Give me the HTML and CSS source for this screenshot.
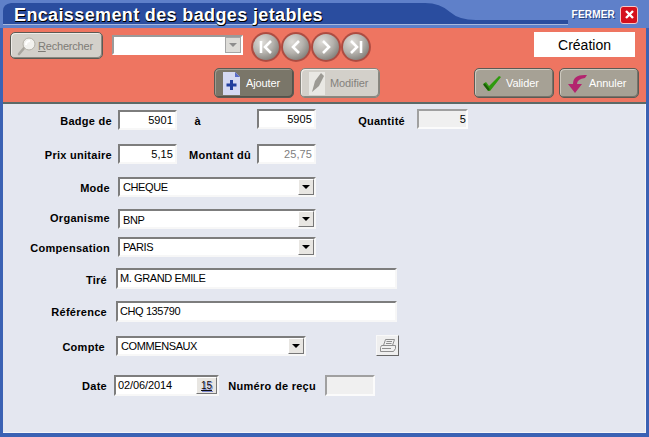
FILE: index.html
```html
<!DOCTYPE html>
<html lang="fr">
<head>
<meta charset="utf-8">
<title>Encaissement des badges jetables</title>
<link rel="stylesheet" href="styles.css">
</head>
<body>
<div class="window">
  <header class="titlebar">
    <svg class="title-shape" width="649" height="28" viewBox="0 0 649 28" aria-hidden="true">
      <path d="M3 25V11Q3 4 11 3H425Q440 3 450 12Q459 20 476 20H568V24H3Z" fill="#2a4d9f"/>
      <path d="M3 24H568V25H3Z" fill="#a9b9de"/>
    </svg>
    <h1 class="title">Encaissement des badges jetables</h1>
    <div class="close-group">
      <span class="close-label">FERMER</span>
      <span class="close-btn">
        <svg width="11" height="11" viewBox="0 0 11 11" aria-hidden="true"><path d="M2 2L9 9M9 2L2 9" stroke="#fff" stroke-width="2.4"/></svg>
      </span>
    </div>
  </header>

  <section class="toolbar">
    <div class="tool-top">
      <button class="btn btn-search">
        <svg width="20" height="20" viewBox="0 0 20 20" aria-hidden="true"><path d="M2 18L8 11" stroke="#a8a59e" stroke-width="2.6" stroke-linecap="round"/><circle cx="12" cy="8" r="6" fill="#f2f1ee" stroke="#b3b0a8"/><path d="M9 9Q9 5 13 5" stroke="#fff" stroke-width="2" fill="none"/></svg>
        <span><u>R</u>echercher</span>
      </button>
      <div class="tool-combo"><span class="tool-arrow"></span></div>
      <nav class="navs">
        <span class="nav"><svg width="26" height="26" viewBox="0 0 26 26" aria-hidden="true"><path d="M8 7V19M18 7L12 13L18 19" stroke="#fff" stroke-width="2.6" fill="none"/></svg></span>
        <span class="nav"><svg width="26" height="26" viewBox="0 0 26 26" aria-hidden="true"><path d="M16 7L10 13L16 19" stroke="#fff" stroke-width="2.6" fill="none"/></svg></span>
        <span class="nav"><svg width="26" height="26" viewBox="0 0 26 26" aria-hidden="true"><path d="M10 7L16 13L10 19" stroke="#fff" stroke-width="2.6" fill="none"/></svg></span>
        <span class="nav"><svg width="26" height="26" viewBox="0 0 26 26" aria-hidden="true"><path d="M18 7V19M8 7L14 13L8 19" stroke="#fff" stroke-width="2.6" fill="none"/></svg></span>
      </nav>
      <div class="status">Création</div>
    </div>
    <div class="tool-bottom">
      <button class="btn btn-action btn-dark gap-4">
        <svg width="22" height="26" viewBox="0 0 22 26" aria-hidden="true"><path d="M3 2H15L20 7V25H3Z" fill="#d5d9f2"/><path d="M15 2L20 7H15Z" fill="#5a6cc8"/><path d="M11.500 10V20M6.500 15H16.500" stroke="#233f9e" stroke-width="3"/></svg>
        <span>Ajouter</span>
      </button>
      <button class="btn btn-action btn-light gap-2">
        <svg width="22" height="26" viewBox="0 0 22 26" aria-hidden="true"><path d="M3 2H19V25H3Z" fill="#e9e8e4"/><path d="M6 22L9 11L15 3L18 6L13 16Z" fill="#9c9a94"/></svg>
        <span>Modifier</span>
      </button>
      <span class="spacer"></span>
      <button class="btn btn-action btn-mid gap-2">
        <svg width="24" height="22" viewBox="0 0 24 22" aria-hidden="true"><path d="M3 12L6 10L9 14L19 4L21 5L10 19H8Z" fill="#2f9a0e"/><path d="M4 12L9 18" stroke="#1c5a08" stroke-width="2"/></svg>
        <span>Valider</span>
      </button>
      <button class="btn btn-action btn-mid btn-last">
        <svg width="24" height="24" viewBox="0 0 24 24" aria-hidden="true"><path d="M22 4Q8 3 8 13H3L10 22L17 13H12Q12 8 20 7Z" fill="#b3246f"/></svg>
        <span>Annuler</span>
      </button>
    </div>
  </section>

  <main class="form">
    <div class="row row-1">
      <label class="lab lab-a">Badge de</label>
      <span class="field num w-a low">5901</span>
      <label class="lab lab-to">à</label>
      <span class="field num w-b high">5905</span>
      <label class="lab lab-qty">Quantité</label>
      <span class="field num off w-c high">5</span>
    </div>
    <div class="row row-2">
      <label class="lab lab-a">Prix unitaire</label>
      <span class="field num w-a">5,15</span>
      <label class="lab lab-due">Montant dû</label>
      <span class="field num w-b grey">25,75</span>
    </div>
    <div class="row row-3">
      <label class="lab lab-b">Mode</label>
      <span class="field combo w-d">CHEQUE<i class="drop"></i></span>
    </div>
    <div class="row row-4">
      <label class="lab lab-b">Organisme</label>
      <span class="field combo w-d">BNP<i class="drop"></i></span>
    </div>
    <div class="row row-5">
      <label class="lab lab-b">Compensation</label>
      <span class="field combo w-d">PARIS<i class="drop"></i></span>
    </div>
    <div class="row row-6">
      <label class="lab lab-c">Tiré</label>
      <span class="field w-e">M. GRAND EMILE</span>
    </div>
    <div class="row row-7">
      <label class="lab lab-c">Référence</label>
      <span class="field w-e">CHQ 135790</span>
    </div>
    <div class="row row-8">
      <label class="lab lab-d">Compte</label>
      <span class="field combo w-f">COMMENSAUX<i class="drop"></i></span>
      <button class="print">
        <svg width="18" height="16" viewBox="0 0 18 16" aria-hidden="true"><path d="M6.500 1.500H15.500L13.500 7.500H4.500ZM7.500 3.500H13M7 5.500H12.500M2.500 7.500H16.500V10.500L14.500 13.500H1.500V9.500ZM3 10.500H12" fill="#f0f0f0" stroke="#8e8e8e"/></svg>
      </button>
    </div>
    <div class="row row-9">
      <label class="lab lab-e">Date</label>
      <span class="field date">02/06/2014<i class="cal">15</i></span>
      <label class="lab lab-rec">Numéro de reçu</label>
      <span class="field off w-g"></span>
    </div>
  </main>
</div>
</body>
</html>
```
FILE: styles.css
```css
* { box-sizing: border-box; }
html, body { margin: 0; height: 100%; }
body { background: #3b62b4; font-family: "Liberation Sans", Arial, sans-serif; overflow: hidden; }
.window { position: relative; width: 649px; height: 437px; display: flex; flex-direction: column; padding: 0 3px 4px; background: #3b62b4; }

.titlebar { position: relative; height: 28px; margin: 0 -3px; padding-left: 14px; display: flex; align-items: center; justify-content: space-between; background: #5f80c9; flex: none; }
.title-shape { position: absolute; left: 0; top: 0; }
.title { position: relative; margin: 0; font-size: 18px; line-height: 22px; font-weight: bold; color: #fff; letter-spacing: .37px; text-shadow: 1px 1px 0 #000, 0 1px 0 #000; white-space: nowrap; padding-top: 2px; }
.close-group { position: relative; display: flex; align-items: center; gap: 5px; padding-right: 11px; padding-top: 1px; }
.close-label { font-size: 10px; font-weight: bold; color: #fff; letter-spacing: .2px; text-shadow: 1px 1px 0 #24427f; }
.close-btn { width: 18px; height: 18px; border-radius: 3px; background: #d5101c; border: 1px solid #f5c9c9; display: flex; align-items: center; justify-content: center; }

.toolbar { height: 76px; flex: none; background: #ee7561; border-bottom: 2px solid #5b6a68; display: flex; flex-direction: column; }
.tool-top { display: flex; align-items: flex-start; height: 38px; padding: 4px 11px 0 7px; }
.tool-bottom { display: flex; height: 35px; padding: 2px 7px 0 211px; gap: 6px; }
.spacer { width: 82px; flex: none; }

.btn { flex: none; display: flex; align-items: center; padding: 0; margin: 0; font-family: "Liberation Sans", Arial, sans-serif; font-size: 11px; border: 1px solid #5c5a54; border-radius: 5px; box-shadow: inset 1px 1px 0 #eeece8, inset -1px -1px 0 #8a8880; }
.btn-search { width: 93px; height: 27px; padding-left: 6px; gap: 1px; background: #d3d0ca; color: #7d7b76; letter-spacing: -.2px; }
.btn-action { width: 80px; height: 30px; padding-left: 5px; gap: 0; letter-spacing: -.1px; }
.gap-4 { gap: 4px; }
.gap-2 { gap: 2px; }
.btn-last { margin-left: -1px; }
.btn-dark { background: #7a7669; color: #fff; box-shadow: inset 1px 1px 0 #a09c90, inset -1px -1px 0 #55524a; }
.btn-light { background: #d3d0ca; color: #83817c; border-color: #86837c; }
.btn-mid { background: #a6a195; color: #fff; box-shadow: inset 1px 1px 0 #cdc9bf, inset -1px -1px 0 #77736a; }

.tool-combo { position: relative; width: 131px; height: 20px; margin: 3px 0 0 9px; background: #fff; border: 2px solid; border-color: #9a9a9a #fff #fff #9a9a9a; flex: none; }
.tool-arrow { position: absolute; right: 0; top: 0; width: 16px; height: 16px; background: #dddcd8; border: 1px solid #a5a5a5; }
.tool-arrow::after { content: ""; position: absolute; left: 3px; top: 5px; border: 4px solid transparent; border-top: 4px solid #8d8d8d; border-bottom: 0; }

.navs { display: flex; gap: 0; margin: 0 0 0 8px; }
.nav { width: 30px; height: 30px; padding: 2px; border-radius: 50%; background: radial-gradient(circle at 50% 50%, #a8473d 0, #a8473d 60%, #d5685a 100%); display: flex; }
.nav svg { border-radius: 50%; background: radial-gradient(circle at 35% 30%, #dedcd8 0, #b5b2ad 45%, #63605a 100%); }

.status { width: 101px; height: 25px; margin-left: auto; background: #fff; color: #000; font-size: 14px; line-height: 27px; text-align: center; }

.form { flex: 1; background: #e4e7f0; padding-top: 5px; font-size: 11px; color: #000; border-right: 1px solid #f4f5f8; border-bottom: 1px solid #f4f5f8; }
.row { display: flex; align-items: center; }
.row-1 { height: 21px; }
.row-2 { height: 20px; margin-top: 14px; }
.row-3 { height: 20px; margin-top: 13px; }
.row-4 { height: 20px; margin-top: 12px; }
.row-5 { height: 20px; margin-top: 8px; }
.row-6 { height: 21px; margin-top: 11px; }
.row-7 { height: 21px; margin-top: 12px; }
.row-8 { height: 21px; margin-top: 13px; }
.row-9 { height: 21px; margin-top: 19px; }
.low { align-self: flex-end; }
.high { align-self: flex-start; }

.lab { flex: none; font-weight: bold; font-size: 11px; letter-spacing: .28px; text-align: right; white-space: nowrap; padding-top: 2px; }
.lab-a { width: 109px; margin-right: 6px; }
.lab-b { width: 107px; margin-right: 8px; }
.lab-c { width: 104px; margin-right: 9px; }
.lab-d { width: 102px; margin-right: 11px; }
.lab-e { width: 104px; margin-right: 7px; }
.lab-to { width: 24px; margin-right: 56px; }
.lab-qty { width: 47px; margin: 0 12px 0 42px; }
.lab-due { width: 63px; margin: 0 6px 0 11px; }
.lab-rec { width: 89px; margin: 0 9px 0 8px; }
.row-4 .lab { padding: 0 0 2px; }
.row-7 .lab, .row-9 .lab { padding: 0; }

.field { position: relative; flex: none; display: block; height: 20px; line-height: 17px; padding: 0 2px; background: #fff; border: 2px solid; border-color: #7d7d7d #f7f7f7 #f7f7f7 #7d7d7d; white-space: nowrap; font-size: 11px; letter-spacing: -.4px; }
.num { text-align: right; letter-spacing: .1px; }
.grey { color: #808080; }
.off { background: #f0f0f0; border-color: #a0a0a0 #fbfbfb #fbfbfb #a0a0a0; }
.w-a { width: 59px; }
.w-b { width: 59px; }
.w-c { width: 51px; padding-right: 0; }
.w-d { width: 198px; }
.w-e { width: 281px; height: 21px; }
.w-f { width: 190px; }
.w-g { width: 50px; height: 21px; }
.combo { line-height: 17px; padding-left: 3px; }
.row-4 .combo { line-height: 19px; }
.drop { position: absolute; right: 0; top: 0; width: 16px; height: 16px; background: #e8e6e2; border: 1px solid; border-color: #fff #777 #777 #fff; }
.drop::after { content: ""; position: absolute; left: 3px; top: 5px; border: 4px solid transparent; border-top: 4px solid #000; border-bottom: 0; }
.date { width: 105px; height: 21px; line-height: 16px; letter-spacing: -.1px; }
.cal { position: absolute; right: 0; top: 0; width: 21px; height: 17px; background: #e8e6e2; border: 1px solid; border-color: #fff #777 #777 #fff; font-style: normal; font-size: 10px; line-height: 15px; text-align: center; text-decoration: underline; color: #111; text-shadow: 1px 1px 0 #7a86d0; }
.print { width: 23px; height: 21px; margin-left: 70px; padding: 1px 0 0; background: #efefef; border: 1px solid; border-color: #f8f8f8 #666 #666 #f8f8f8; display: flex; align-items: center; justify-content: center; }
```
